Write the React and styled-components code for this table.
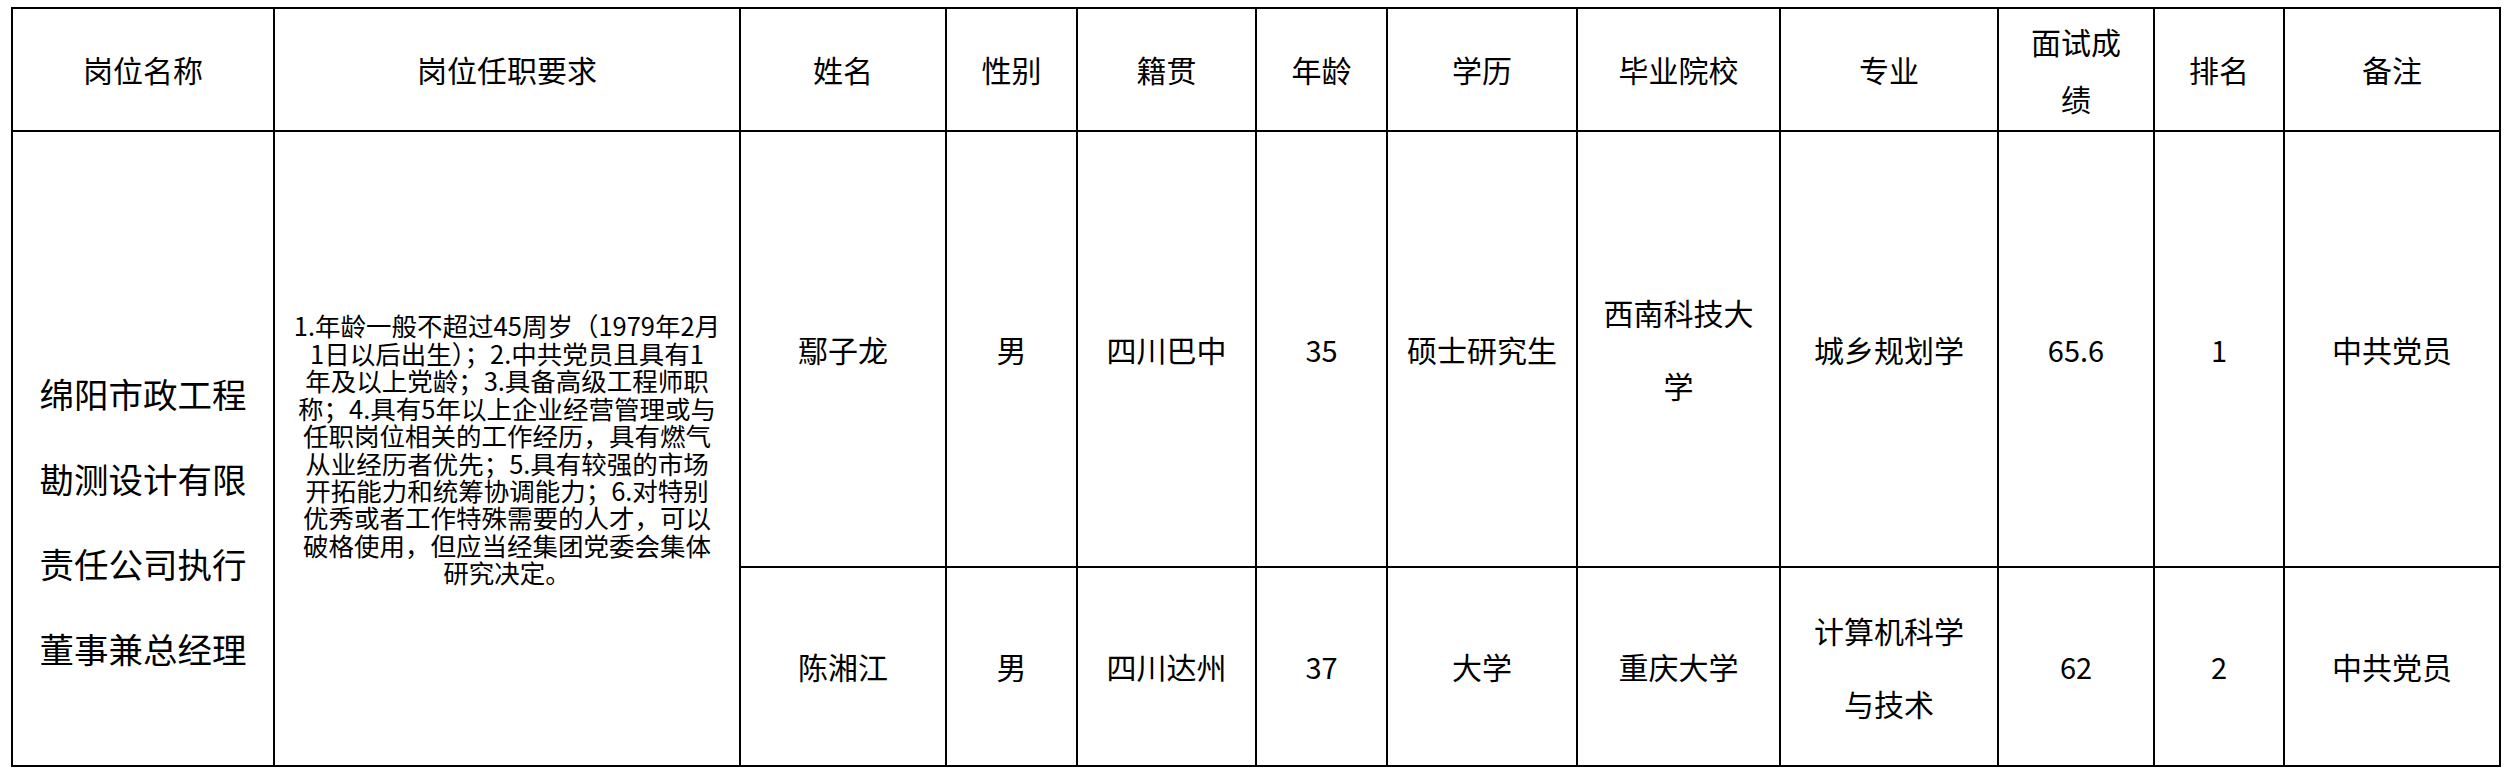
import React from "react";
import styled, { createGlobalStyle } from "styled-components";

const GlobalStyle = createGlobalStyle`
  html, body {
    margin: 0;
    padding: 0;
    background: #fff;
  }
  body {
    font-family: "Noto Sans CJK SC", "Noto Sans", sans-serif;
    color: #000;
  }
`;

const Sheet = styled.div`
  display: inline-grid;
  margin: 7px 0 0 11px;
  grid-template-columns: 260px 464px 204px 129px 177px 129px 188px 201px 216px 154px 128px 214px;
  grid-template-rows: 121px 434px 197px;
  gap: 2px;
  background: #000;
  border: 2px solid #000;
`;

const Cell = styled.div`
  background: #fff;
  display: flex;
  flex-direction: column;
  align-items: center;
  justify-content: center;
  text-align: center;
  font-size: 30px;
  line-height: ${(p) => p.$lh || 73}px;
  white-space: nowrap;
  ${(p) => (p.$rows ? `grid-row: span ${p.$rows};` : "")}
`;

const HeadCell = styled(Cell)`
  line-height: 57px;
`;

const PostCell = styled(Cell)`
  justify-content: flex-start;
  padding-top: 219px;
  font-size: 34.5px;
  line-height: 85px;
`;

const Requirement = styled(Cell)`
  font-size: 25.5px;
  line-height: 27.4px;
`;

const Num = styled.span`
  font-size: 29px;
`;

const headers = [
  "岗位名称",
  "岗位任职要求",
  "姓名",
  "性别",
  "籍贯",
  "年龄",
  "学历",
  "毕业院校",
  "专业",
  ["面试成", "绩"],
  "排名",
  "备注",
];

const postLines = ["绵阳市政工程", "勘测设计有限", "责任公司执行", "董事兼总经理"];

const reqLines = [
  "1.年龄一般不超过45周岁（1979年2月",
  "1日以后出生）；2.中共党员且具有1",
  "年及以上党龄；3.具备高级工程师职",
  "称；4.具有5年以上企业经营管理或与",
  "任职岗位相关的工作经历，具有燃气",
  "从业经历者优先；5.具有较强的市场",
  "开拓能力和统筹协调能力；6.对特别",
  "优秀或者工作特殊需要的人才，可以",
  "破格使用，但应当经集团党委会集体",
  "研究决定。",
];

const candidates = [
  {
    name: "鄢子龙",
    sex: "男",
    origin: "四川巴中",
    age: "35",
    degree: "硕士研究生",
    school: ["西南科技大", "学"],
    major: ["城乡规划学"],
    score: "65.6",
    rank: "1",
    note: "中共党员",
  },
  {
    name: "陈湘江",
    sex: "男",
    origin: "四川达州",
    age: "37",
    degree: "大学",
    school: ["重庆大学"],
    major: ["计算机科学", "与技术"],
    score: "62",
    rank: "2",
    note: "中共党员",
  },
];

const Lines = ({ items }) =>
  items.map((t, i) => <span key={i}>{t}</span>);

export default function App() {
  return (
    <>
      <GlobalStyle />
      <Sheet>
        {headers.map((h, i) => (
          <HeadCell key={i}>
            {Array.isArray(h) ? <Lines items={h} /> : h}
          </HeadCell>
        ))}

        <PostCell $rows={2}>
          <Lines items={postLines} />
        </PostCell>
        <Requirement $rows={2}>
          <Lines items={reqLines} />
        </Requirement>

        {candidates.map((c) => (
          <React.Fragment key={c.name}>
            <Cell>{c.name}</Cell>
            <Cell>{c.sex}</Cell>
            <Cell>{c.origin}</Cell>
            <Cell>
              <Num>{c.age}</Num>
            </Cell>
            <Cell>{c.degree}</Cell>
            <Cell>
              <Lines items={c.school} />
            </Cell>
            <Cell>
              <Lines items={c.major} />
            </Cell>
            <Cell>
              <Num>{c.score}</Num>
            </Cell>
            <Cell>
              <Num>{c.rank}</Num>
            </Cell>
            <Cell>{c.note}</Cell>
          </React.Fragment>
        ))}
      </Sheet>
    </>
  );
}
